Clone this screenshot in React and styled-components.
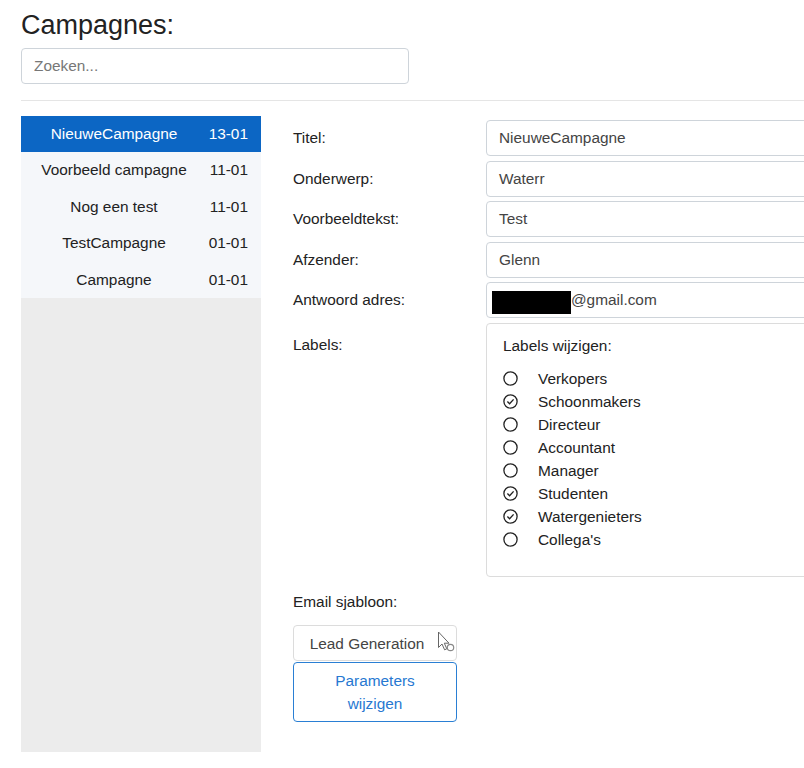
import React from "react";
import styled, { createGlobalStyle } from "styled-components";

const GlobalStyle = createGlobalStyle`
  body {
    margin: 0;
    background: #fff;
    font-family: "Liberation Sans", Arial, sans-serif;
    color: #222;
    overflow: hidden;
  }
`;

const Page = styled.div`
  box-sizing: border-box;
  width: 804px;
  overflow: hidden;
  padding: 9px 0 0 21px;
`;

const Title = styled.h1`
  margin: 0;
  font-size: 27px;
  line-height: 32px;
  font-weight: 400;
  color: #222;
`;

const Search = styled.input`
  box-sizing: border-box;
  display: block;
  margin-top: 7px;
  width: 388px;
  height: 36px;
  padding: 0 12px;
  border: 1px solid #ced4da;
  border-radius: 4px;
  font-family: inherit;
  font-size: 15.4px;
  color: #495057;
  &::placeholder {
    color: #777;
  }
`;

const Divider = styled.div`
  margin: 16px 0 15px;
  border-top: 1px solid #e5e5e5;
`;

const Main = styled.div`
  display: flex;
  gap: 32px;
  margin-right: -30px;
`;

const Sidebar = styled.div`
  width: 240px;
  flex-shrink: 0;
  background: #ececec;
`;

const Item = styled.div`
  display: grid;
  grid-template-columns: 1fr 54px;
  height: 36.4px;
  line-height: 36.4px;
  font-size: 15.4px;
  background: ${({ $active }) => ($active ? "#0c66c4" : "#f5f7fa")};
  color: ${({ $active }) => ($active ? "#fff" : "#222")};
`;

const ItemName = styled.span`
  text-align: center;
`;

const ItemDate = styled.span`
  text-align: right;
  padding-right: 13px;
`;

const Form = styled.div`
  flex: 1;
  padding: 4px 0 30px;
`;

const Fields = styled.div`
  display: flex;
  flex-direction: column;
  gap: 4.5px;
`;

const Row = styled.div`
  display: grid;
  grid-template-columns: 193px 1fr;
  align-items: start;
`;

const Label = styled.div`
  font-size: 15.4px;
  line-height: 20px;
  padding-top: ${({ $top }) => $top || 8}px;
  color: #222;
`;

const Field = styled.div`
  box-sizing: border-box;
  height: 36px;
  padding: 0 12px;
  display: flex;
  align-items: center;
  border: 1px solid #ced4da;
  border-radius: 4px;
  font-size: 15.4px;
  color: #444;
`;

const Redacted = styled.span`
  display: inline-block;
  width: 79px;
  height: 23px;
  background: #000;
  margin-left: -7px;
  margin-top: 4px;
`;

const LabelBox = styled.div`
  box-sizing: border-box;
  height: 254px;
  padding: 12px 16px 0;
  border: 1px solid #dcdcdc;
  border-radius: 4px;
  font-size: 15.4px;
  color: #222;
`;

const BoxTitle = styled.div`
  line-height: 20px;
  margin-bottom: 11px;
`;

const Check = styled.div`
  display: flex;
  align-items: center;
  gap: 20px;
  height: 23.1px;
  line-height: 23.1px;
`;

const Section = styled.div`
  margin-top: 15px;
`;

const TemplateLabel = styled.div`
  font-size: 15.4px;
  line-height: 20px;
  margin-bottom: 13px;
`;

const ButtonStack = styled.div`
  width: 164px;
  display: flex;
  flex-direction: column;
  gap: 1px;
`;

const Button = styled.div`
  position: relative;
  box-sizing: border-box;
  border: 1px solid ${({ $primary }) => ($primary ? "#2a7fd4" : "#dcdcdc")};
  border-radius: 4px;
  color: ${({ $primary }) => ($primary ? "#2778d1" : "#444")};
  font-size: 15.4px;
  line-height: 23px;
  text-align: center;
  padding: ${({ $primary }) => ($primary ? "6px 8px" : "6px 16px 5px 0")};
`;

const Cursor = styled.svg`
  position: absolute;
  left: 143px;
  top: 5px;
`;

const Footer = styled.div`
  display: flex;
  gap: 60px;
  margin-top: 16px;
`;

const FooterLine = styled.div`
  border-top: 1px solid #e5e5e5;
  width: ${({ $w }) => ($w ? `${$w}px` : "auto")};
  flex: ${({ $w }) => ($w ? "none" : 1)};
`;

const campaigns = [
  { name: "NieuweCampagne", date: "13-01", active: true },
  { name: "Voorbeeld campagne", date: "11-01" },
  { name: "Nog een test", date: "11-01" },
  { name: "TestCampagne", date: "01-01" },
  { name: "Campagne", date: "01-01" },
];

const labels = [
  ["Verkopers", false],
  ["Schoonmakers", true],
  ["Directeur", false],
  ["Accountant", false],
  ["Manager", false],
  ["Studenten", true],
  ["Watergenieters", true],
  ["Collega's", false],
];

const Radio = ({ checked }) => (
  <svg width="15" height="15" viewBox="0 0 15 15">
    <circle cx="7.5" cy="7.5" r="6.6" fill="none" stroke="#222" strokeWidth="1.3" />
    {checked && (
      <path d="M4.4 7.6 L6.6 9.8 L10.6 5.4" fill="none" stroke="#222" strokeWidth="1.4" />
    )}
  </svg>
);

const App = () => {
  return (
    <Page>
      <GlobalStyle />
      <Title>Campagnes:</Title>
      <Search placeholder="Zoeken..." />
      <Divider />
      <Main>
        <Sidebar>
          {campaigns.map((c) => (
            <Item key={c.name} $active={c.active}>
              <ItemName>{c.name}</ItemName>
              <ItemDate>{c.date}</ItemDate>
            </Item>
          ))}
        </Sidebar>
        <Form>
          <Fields>
            <Row>
              <Label>Titel:</Label>
              <Field>NieuweCampagne</Field>
            </Row>
            <Row>
              <Label>Onderwerp:</Label>
              <Field>Waterr</Field>
            </Row>
            <Row>
              <Label>Voorbeeldtekst:</Label>
              <Field>Test</Field>
            </Row>
            <Row>
              <Label>Afzender:</Label>
              <Field>Glenn</Field>
            </Row>
            <Row>
              <Label>Antwoord adres:</Label>
              <Field>
                <Redacted />
                @gmail.com
              </Field>
            </Row>
            <Row>
              <Label $top={12}>Labels:</Label>
              <LabelBox>
                <BoxTitle>Labels wijzigen:</BoxTitle>
                {labels.map(([name, checked]) => (
                  <Check key={name}>
                    <Radio checked={checked} />
                    {name}
                  </Check>
                ))}
              </LabelBox>
            </Row>
          </Fields>
          <Section>
            <TemplateLabel>Email sjabloon:</TemplateLabel>
            <ButtonStack>
              <Button>
                Lead Generation
                <Cursor width="20" height="22" viewBox="0 0 20 22">
                  <path
                    d="M1.5 1 L1.5 16.5 L5 13 L7.6 18.8 L9.8 17.8 L7.3 12.2 L12 12.2 Z"
                    fill="#fff"
                    stroke="#666"
                    strokeWidth="1"
                  />
                  <circle cx="13.5" cy="16.5" r="3.2" fill="none" stroke="#888" strokeWidth="1.2" />
                </Cursor>
              </Button>
              <Button $primary>
                Parameters
                <br />
                wijzigen
              </Button>
            </ButtonStack>
          </Section>
        </Form>
      </Main>
      <Footer>
        <FooterLine $w={212} />
        <FooterLine />
      </Footer>
    </Page>
  );
};

export default App;
